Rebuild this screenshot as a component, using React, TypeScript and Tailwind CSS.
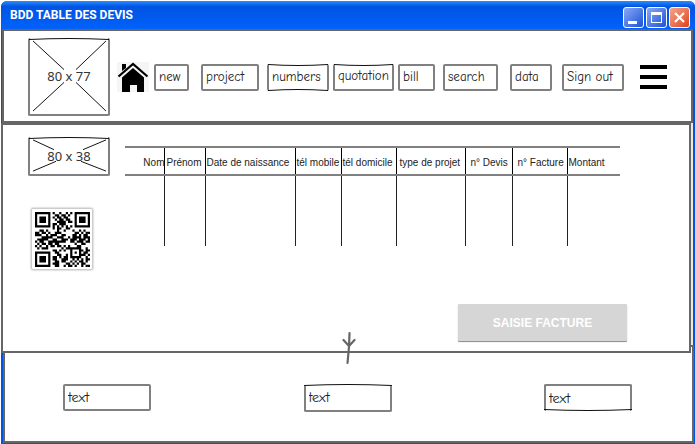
import React from "react";

const SKETCH_FONT = "font-['Comic_Neue','Noto_Sans',sans-serif]";

type Edge = "none" | "top" | "both" | "bottom";

function SketchEdge({ side, bow, inset = "-inset-x-px w-[calc(100%+2px)]" }: { side: "top" | "bottom"; bow: "in" | "out"; inset?: string }) {
  const down = (side === "top") === (bow === "in");
  return (
    <svg
      aria-hidden="true"
      viewBox="0 0 100 4"
      preserveAspectRatio="none"
      className={`pointer-events-none absolute h-1 ${inset} ${side === "top" ? "-top-px" : "-bottom-px"}`}
    >
      <path
        d={down ? "M0 1.5 Q50 3.5 100 1.5" : "M0 2.5 Q50 .5 100 2.5"}
        fill="none"
        stroke="#111"
        strokeWidth="1.2"
        vectorEffect="non-scaling-stroke"
      />
    </svg>
  );
}

const navItems: { label: string; box: string; edge: Edge }[] = [
  { label: "new", box: "w-[35px]", edge: "none" },
  { label: "project", box: "w-[58px] ml-3", edge: "none" },
  { label: "numbers", box: "w-[62px] ml-2", edge: "both" },
  { label: "quotation", box: "w-[61px] ml-1", edge: "top" },
  { label: "bill", box: "w-[37px] ml-1", edge: "none" },
  { label: "search", box: "w-[55px] ml-2", edge: "none" },
  { label: "data", box: "w-[42px] ml-3", edge: "none" },
  { label: "Sign out", box: "w-[62px] ml-2.5", edge: "none" },
];

const columns = [
  { label: "Nom", width: 40, cell: "text-right" },
  { label: "Prénom", width: 41, cell: "pl-px text-left" },
  { label: "Date de naissance", width: 90, cell: "text-left" },
  { label: "tél mobile", width: 46, cell: "text-left" },
  { label: "tél domicile", width: 55, cell: "text-left" },
  { label: "type de projet", width: 69, cell: "pl-0.5 text-left" },
  { label: "n° Devis", width: 47, cell: "pl-1 text-left" },
  { label: "n° Facture", width: 55, cell: "pl-1 text-left" },
  { label: "Montant", width: 52, cell: "text-left" },
];

const qrRows = [
  "1111111010010010101111111",
  "1000001001101101001000001",
  "1011101010110110001011101",
  "1011101001011011001011101",
  "1011101000111101101011101",
  "1000001011011100001000001",
  "1111111010101010101111111",
  "0000000010110011000000000",
  "0011010000100100010010100",
  "1101101001110000001101011",
  "1110010111001100011010110",
  "0001111100111001011110111",
  "0111110011001110111011101",
  "1011001111111100110111011",
  "0101101101100000001001100",
  "1010010110110101000110000",
  "0101110000001011111110010",
  "0000000011010100100011011",
  "1111111001100000101010110",
  "1000001000110010100011101",
  "1011101011010110111110010",
  "1011101011001110010101011",
  "1011101001101100101011010",
  "1000001011100011010101100",
  "1111111001100101101001011",
];

const qrPath = qrRows
  .flatMap((row, y) => row.split("").map((v, x) => (v === "1" ? `M${x} ${y}h1v1h-1z` : "")))
  .join("");

function QrCode() {
  return (
    <svg viewBox="0 0 25 25" className="size-[55px]" role="img" aria-label="QR code">
      <path d={qrPath} />
    </svg>
  );
}

function Placeholder({ label, size, vb, lines }: { label: string; size: string; vb: string; lines: string }) {
  return (
    <div
      className={`relative flex w-[82px] shrink-0 items-center justify-center rounded-[2px] border-2 border-t-0 border-[#808080] ${size}`}
    >
      <SketchEdge side="top" bow="out" />
      <svg viewBox={vb} preserveAspectRatio="none" className="absolute inset-0 size-full" aria-hidden="true">
        <path d={lines} stroke="#111" strokeWidth="1" fill="none" />
      </svg>
      <span className="relative font-['Noto_Sans',sans-serif] text-[13px] leading-4 text-[#333]">{label}</span>
    </div>
  );
}

function TitleBar() {
  const base = "flex size-[21px] items-center justify-center rounded-[3px] border border-white";
  return (
    <div className="flex h-7 items-center justify-between rounded-t-md bg-linear-to-b from-[#2a8cff] via-[#0054e3] via-20% to-[#0062fb] pr-[5px] pl-[9px]">
      <h1 className="font-[Roboto,sans-serif] text-[12px] leading-4 font-bold text-white">BDD TABLE DES DEVIS</h1>
      <div className="flex gap-0.5 pt-1">
        <button aria-label="Minimize" className={`${base} bg-linear-to-br from-[#8aa8f5] to-[#1c4fd6]`}>
          <svg viewBox="0 0 19 19" className="size-[19px]">
            <path d="M4 13h9v3H4z" fill="#fff" />
          </svg>
        </button>
        <button aria-label="Maximize" className={`${base} bg-linear-to-br from-[#8aa8f5] to-[#1c4fd6]`}>
          <svg viewBox="0 0 19 19" className="size-[19px]">
            <path d="M4 4h11v11H4zM5 7v7h9V7z" fill="#fff" fillRule="evenodd" />
          </svg>
        </button>
        <button aria-label="Close" className={`${base} bg-linear-to-br from-[#f0a58c] to-[#dd3f0c]`}>
          <svg viewBox="0 0 19 19" className="size-[19px]">
            <path d="M5 5l9 9M14 5l-9 9" stroke="#fff" strokeWidth="2.2" />
          </svg>
        </button>
      </div>
    </div>
  );
}

function Header() {
  return (
    <header className="mr-0.5 ml-px flex items-center border-2 border-[#666] bg-white pt-[7px] pb-[5px] pl-6">
      <Placeholder label="80 x 77" size="h-[78px]" vb="0 0 78 77" lines="M3 3L34 32M46 32L76 3M3 74L34 45M46 45L76 74" />
      <a href="#home" aria-label="Home" className="ml-[7px] shrink-0 bg-[#f5f5f5]">
        <svg viewBox="0 0 32 30" className="h-[30px] w-8">
          <path d="M5 2h4v4L5 9z" />
          <path d="M1.5 14.5L16 2l14.500 12.500" fill="none" stroke="#000" strokeWidth="2.200" />
          <path d="M16 6l11 9.500V30h-7v-7h-7v7H5V15.500z" />
        </svg>
      </a>
      <nav className="ml-[5px] flex items-center">
        {navItems.map(({ label, box, edge }) => (
          <button
            key={label}
            className={`relative h-[27px] shrink-0 rounded-[2px] border-2 border-[#808080] pl-[3px] text-left text-[13px] leading-4 whitespace-nowrap text-[#222] ${SKETCH_FONT} ${box} ${edge !== "none" ? "border-t-0" : ""} ${edge === "both" ? "border-b-0" : ""}`}
          >
            {edge !== "none" && <SketchEdge side="top" bow="in" />}
            {edge === "both" && <SketchEdge side="bottom" bow="in" />}
            {label}
          </button>
        ))}
      </nav>
      <button aria-label="Menu" className="ml-4 flex shrink-0 flex-col gap-1.5">
        <span className="h-1 w-[27px] bg-black" />
        <span className="h-1 w-[27px] bg-black" />
        <span className="h-1 w-[27px] bg-black" />
      </button>
    </header>
  );
}

function Quotes() {
  return (
    <section className="relative z-10 mr-1 border-2 border-[#666] bg-white pt-3 pb-[10px] pl-[25px]">
      <div className="flex items-start">
        <div className="shrink-0">
          <Placeholder label="80 x 38" size="h-[39px]" vb="0 0 78 38" lines="M3 3L24 13M53 13L76 3M3 35L26 25M51 25L76 35" />
          <div className="mt-8 ml-[3px] flex size-[62px] items-center justify-center rounded-[2px] border border-[#ccc] shadow-[0_0_2px_#999]">
            <QrCode />
          </div>
        </div>
        <div className="mt-[9px] mr-[69px] ml-[15px] flex-1">
          <table className="w-full table-fixed border-collapse font-['Liberation_Sans',Arial,sans-serif] text-[10px] leading-3 text-[#222]">
            <colgroup>
              {columns.map((c) => (
                <col key={c.label} style={{ width: `${(c.width / 495) * 100}%` }} />
              ))}
            </colgroup>
            <thead>
              <tr className="h-7 border-y-2 border-[#808080]">
                {columns.map((c) => (
                  <th
                    key={c.label}
                    scope="col"
                    className={`border-r border-r-black pt-1 font-normal whitespace-nowrap last:border-r-0 ${c.cell}`}
                  >
                    {c.label}
                  </th>
                ))}
              </tr>
            </thead>
            <tbody>
              <tr className="h-[71px]">
                {columns.map((c) => (
                  <td key={c.label} className="border-r border-r-[#222] last:border-r-0" />
                ))}
              </tr>
            </tbody>
          </table>
        </div>
      </div>
      <div className="mt-[34px] mr-[62px] flex justify-end">
        <button className="h-[37px] w-[169px] rounded-[1px] bg-[#d6d6d6] font-['Liberation_Sans',Arial,sans-serif] text-[12px] leading-4 font-bold text-white shadow-[0_1px_1px_#888]">
          SAISIE FACTURE
        </button>
      </div>
      <svg viewBox="0 0 14 34" className="absolute -bottom-[14px] left-1/2 -ml-1 h-[34px] w-3.5" aria-hidden="true">
        <path
          d="M7.500 2L7 16L5.500 32M1.500 9L7 15L12.500 9"
          fill="none"
          stroke="#666"
          strokeWidth="2.200"
          strokeLinecap="round"
          strokeLinejoin="round"
        />
      </svg>
    </section>
  );
}

const footerFields: { id: string; edge: Edge }[] = [
  { id: "left", edge: "none" },
  { id: "middle", edge: "top" },
  { id: "right", edge: "bottom" },
];

function Footer() {
  return (
    <footer className="-mt-2 mr-px ml-0.5 flex justify-between border-2 border-[#666] bg-white pt-[37px] pr-[60px] pb-[30px] pl-[58px]">
      {footerFields.map(({ id, edge }) => (
        <div key={id} className="relative h-[27px] w-[88px]">
          <input
            aria-label={`text ${id}`}
            defaultValue="text"
            className={`h-full w-full rounded-[2px] border-2 border-[#808080] bg-white pl-[3px] text-[14px] text-[#222] ${SKETCH_FONT} ${edge === "top" ? "border-t-0" : ""} ${edge === "bottom" ? "border-b-0" : ""}`}
          />
          {edge === "top" && <SketchEdge side="top" bow="out" inset="inset-x-0 w-full" />}
          {edge === "bottom" && <SketchEdge side="bottom" bow="out" inset="inset-x-0 w-full" />}
        </div>
      ))}
    </footer>
  );
}

export default function App() {
  return (
    <div className="bg-white pt-px pl-px">
      <div className="rounded-t-md bg-[#0054e3] pb-px">
        <TitleBar />
        <Header />
        <div className="mr-0.5 bg-[#ece9d8]">
          <div className="-mr-0.5">
            <Quotes />
          </div>
        </div>
        <Footer />
      </div>
    </div>
  );
}
